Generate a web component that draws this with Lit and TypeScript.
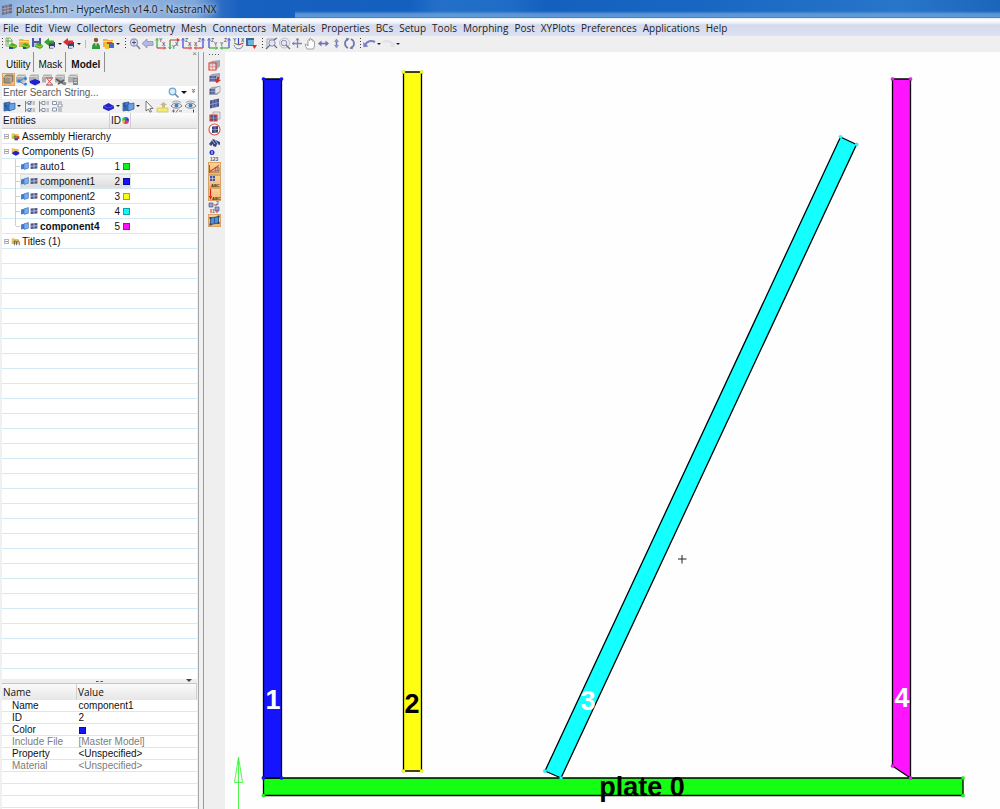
import { LitElement, html, svg, css } from "lit";
import { customElement, property, state } from "lit/decorators.js";
import { classMap } from "lit/directives/class-map.js";
import { styleMap } from "lit/directives/style-map.js";

const cube = svg`<path d="M1 5l3-2 8-1v6l-3 3H1z" fill="#a3a6b6"/><path d="M2 5h6v5H2z" fill="#4a5488"/><path d="M4 5v5M6 5v5M2 7.500h6" stroke="#a9b2dc" stroke-width=".6"/>`;
const blob = (c: string, d: string) => svg`<path d="M4 8l3-2 5 2v2l-3 2-5-2z" fill=${c}/><path d="M4 8l5 2 3-2" fill="none" stroke=${d} stroke-width=".8"/>`;
const folder = svg`<path d="M1 2h4l1 1h5v7H1z" fill="#e9b43f"/><path d="M1 4.500h10" stroke="#fbe08b"/>`;
const grayCube = svg`<path d="M1 3.500l2-2h8v6l-2 2H1z" fill="#b0b0b0"/><path d="M1 3.500h8v6M9 3.500l2-2" stroke="#dedede" fill="none" stroke-width=".8"/>`;
const glass = svg`<circle cx="6" cy="5.500" r="3.500" fill="#dfe3f4" stroke="#9a9fb8" stroke-width="1.300"/><path d="M8.500 8l3.500 4" stroke="#8286a0" stroke-width="1.600"/>`;
const plates = svg`<path d="M1 3l6-1v8l-6 1z" fill="#3f7fd0" stroke="#2a5592" stroke-width=".7"/><path d="M6 4l6-1v6l-6 2z" fill="#6ba2e6" stroke="#2a5592" stroke-width=".7"/>`;
const list = svg`<path d="M2.500 1v11M2.500 3h2.500M2.500 10h2.500" stroke="#888" stroke-width="1" fill="none"/><path d="M5 1.500h3v3H5zM5 8.500h3v3H5z" fill="#fff" stroke="#7d88a0" stroke-width=".9"/><path d="M9.500 2h2.500M9.500 4h2.500M9.500 9h2.500M9.500 11h2.500" stroke="#8a8a8a" stroke-width=".9"/>`;
const axes = (v: string, h: string, vc: string, hc: string, right = false) => svg`
  <path d=${right ? "M10 2v9" : "M3 2v9"} stroke=${vc} stroke-width="1.200"/>
  <path d=${right ? "M10 11H2" : "M3 11h8"} stroke=${hc} stroke-width="1.200"/>
  <path d=${right ? "M8.500 3.500L10 1l1.500 2.500" : "M1.500 3.500L3 1l1.500 2.500"} fill="none" stroke=${vc} stroke-width=".7"/>
  <path d=${right ? "M3.500 9.500L1 11l2.500 1.500" : "M9.500 9.500L12 11l-2.500 1.500"} fill="none" stroke=${hc} stroke-width=".7"/>
  <text x="5" y="5" class="tiny">${v}</text><text x=${right ? 1 : 8} y="9" class="tiny">${h}</text>`;

const ICONS: Record<string, unknown> = {
  app: svg`<path d="M1 3l10-2v9L1 12z" fill="#6c6a80"/><path d="M4 2.500v9M7 2v9M1 6l10-2M1 9l10-2" stroke="#b9b7c8" stroke-width=".7"/>`,
  newModel: svg`<path d="M1 1h4l2 2v6H1z" fill="#f4f7f0" stroke="#7c9a6c" stroke-width=".8"/><path d="M1 4h6M3 1v7" stroke="#4ca82c"/>${blob("#3fae2a", "#e7d23c")}<path d="M4 10h4v2H4z" fill="#2849c4"/>`,
  open: svg`${folder}${blob("#3fae2a", "#e7d23c")}<path d="M5 10h3v2H5z" fill="#2849c4"/>`,
  save: svg`<path d="M1 1h9v9H1z" fill="#4d59a6"/><path d="M3 1h5v3H3z" fill="#dfe4f5"/><path d="M3 6h5v4H3z" fill="#b9c2e4"/>${blob("#3fae2a", "#e7d23c")}`,
  import: svg`<path d="M5 5h6v5l-2 1.500H5z" fill="#3c4370"/><path d="M0 5l5-4v2.500h5v3H5V9z" fill="#35a52c"/><path d="M6 9h4v2H6z" fill="#cfd3e4"/>`,
  export: svg`<path d="M5 5h6v5l-2 1.500H5z" fill="#3c4370"/><path d="M0 5l5-4v2.500h5v3H5V9z" fill="#d83030"/><path d="M6 9h4v2H6z" fill="#cfd3e4"/>`,
  user: svg`<circle cx="7" cy="3" r="2.200" fill="#8a5a33"/><path d="M3 12c0-5 1-6 4-6s4 1 4 6z" fill="#2d9a3f"/><path d="M6 6h2l-1 4z" fill="#e9c9a4"/>`,
  cards: svg`${folder}<path d="M5 5h5v6H5z" fill="#d8402b"/><path d="M7 6h5v5H7z" fill="#3a70c9"/><path d="M3 7h4v5H3z" fill="#f0c22e"/>`,
  zoomPlus: svg`${glass}<path d="M4 5.500h4M6 3.500v4" stroke="#4b4f86" stroke-width="1"/>`,
  back: svg`<path d="M1 6.500l5-4.500v2.500h6v4H6V11z" fill="#b3b8e2" stroke="#8087bd" stroke-width=".7"/>`,
  xyTop: axes("Y", "X", "#35a835", "#d53a3a"),
  xyBottom: svg`<path d="M3 12V3" fill="none" stroke="#35a835" stroke-width="1.300"/><path d="M3 3h9M10 1.500L12 3l-2 1.500" fill="none" stroke="#d53a3a" stroke-width="1.200"/><path d="M1.500 10L3 12l1.500-2" fill="none" stroke="#35a835" stroke-width=".7"/><text x="8" y="9" class="tiny">X</text><text x="5" y="12" class="tiny">Y</text>`,
  xzLeft: axes("Z", "X", "#3a45d0", "#d53a3a"),
  xzRight: axes("Z", "X", "#3a45d0", "#d53a3a", true),
  yzLeft: axes("Z", "Y", "#3a45d0", "#35a835"),
  yzRight: axes("Z", "Y", "#3a45d0", "#35a835", true),
  iso: svg`<path d="M6.500 1v7" stroke="#3a45d0" stroke-width="1.200"/><path d="M6.500 8L2 6" stroke="#35a835" stroke-width="1.300"/><path d="M6.500 8l5-2" stroke="#d53a3a" stroke-width="1.300"/><path d="M2 8c1 5 8 5 9 0" fill="none" stroke="#7c7f9e" stroke-width="1"/><text x="1" y="5" class="tiny">Y</text><text x="9" y="5" class="tiny">X</text>`,
  views: svg`<path d="M1 1h8v8H1z" fill="#3d6796"/><path d="M3 3h6v5H3z" fill="#6fb1dd"/><path d="M7 8l5 0-2.500 4z" fill="#dd2a2a"/>`,
  zoomBox: svg`<path d="M2 11V2h9" fill="none" stroke="#9a9cb4" stroke-width=".9"/><circle cx="7" cy="6" r="3.200" fill="#dfe3f4" stroke="#8d92ad"/><path d="M5 8l-4 4M9 8l3 3M9 3l3-2" stroke="#6a6d98" stroke-width="1.200"/>`,
  zoomCircle: svg`<circle cx="6.500" cy="6" r="5" fill="none" stroke="#b4b6c8" stroke-width=".9"/><circle cx="6" cy="6" r="2.800" fill="#e4e7f4" stroke="#8d92ad"/><path d="M8 8l4 4" stroke="#6e7390" stroke-width="1.500"/>`,
  pan: svg`<path d="M6.500 2v9M2 6.500h9" stroke="#7f83bc" stroke-width="1.300"/><path d="M5 3.500L6.500 1 8 3.500M3.500 5L1 6.500 3.500 8" fill="none" stroke="#6f74b4" stroke-width=".8"/>`,
  hand: svg`<path d="M3 12L1 7.500l1.500-.5L4 9V3.500C4 2.500 5.500 2.500 5.500 3.500V2c0-1 1.700-1 1.700 0v1.200c0-1 1.600-1 1.600 0V4.500c0-1 1.700-.9 1.700.2V9l-1 3z" fill="#fff" stroke="#8a8a8a" stroke-width=".8"/>`,
  horiz: svg`<path d="M3 6.500h7" stroke="#6f74b4" stroke-width="1.600"/><path d="M4.500 3.500v6L1 6.500zM8.500 3.500v6L12 6.500z" fill="#6f74b4"/>`,
  vert: svg`<path d="M6.500 3v7" stroke="#6f74b4" stroke-width="1.600"/><path d="M4 5h5L6.500 1.500zM4 8h5l-2.500 3.500z" fill="#8e93cc"/>`,
  rotate: svg`<path d="M5 2C1 4 1 9 5 11M8 2c4 2 4 7 0 9" fill="none" stroke="#6f74b4" stroke-width="1.700"/><path d="M3 .8l3.500.7L4.500 4zM10 12.200l-3.500-.7L8.500 9z" fill="#6f74b4"/>`,
  undo: svg`<path d="M2 8c2-4 6-5 10-3" fill="none" stroke="#7a7ec4" stroke-width="2"/><path d="M0 5l5.500 4.500-5 .8z" fill="#7a7ec4"/>`,
  redo: svg`<path d="M11 8C9 4 5 3 1 5" fill="none" stroke="#dfe0ea" stroke-width="2"/><path d="M13 5L7.500 9.500l5 .8z" fill="#dfe0ea"/>`,
  box: svg`<path d="M2 4l2-2h7v6l-2 2H2z" fill="#9d9583" stroke="#6d6b66" stroke-width=".8"/><path d="M2 4h7v6" fill="none" stroke="#cbbfa8"/>`,
  share: svg`${grayCube}<path d="M4 8l6-3M4 8l6 4" stroke="#3a86cf"/><circle cx="4" cy="8" r="1.700" fill="#2c7fd4"/><circle cx="10.500" cy="5.500" r="1.500" fill="#2c7fd4"/><circle cx="10.500" cy="11" r="1.500" fill="#2c7fd4"/>`,
  blueComp: svg`${grayCube}<path d="M2 8l5-2 5 2v2l-5 2.500L2 10z" fill="#2222cc"/>`,
  hour: svg`${grayCube}<path d="M5 4.500h7v8H5z" fill="#f3eded"/><path d="M5 5h7M5 12h7" stroke="#8b3c3c"/><path d="M6 5.500l5 6M11 5.500l-5 6" stroke="#c44" stroke-width="1" fill="none"/>`,
  tools: svg`${grayCube}<path d="M2 6l8 5M4 11l6-4" stroke="#5a5a5a" stroke-width="1.600"/><circle cx="10.500" cy="10.500" r="1.800" fill="#888"/>`,
  solver: svg`${grayCube}<path d="M6 5h5v7H6z" fill="#8d8787"/><path d="M7 7h3M7 9.500h3" stroke="#ddd"/>`,
  entity: svg`${plates}<path d="M1 3l5 8M3 2.500v8M1 6h5" stroke="#244b84" stroke-width=".7"/>`,
  list1: svg`${list}<path d="M5.500 3l1 1 2-3M5.500 10l1 1 2-3" fill="none" stroke="#3a72b8" stroke-width=".9"/>`,
  list2: list,
  list3: svg`<path d="M1.500 1.500h4v3h-4zM7 4h4v3H7zM1.500 8h4v3h-4z" fill="#fff" stroke="#7d88a0" stroke-width=".9"/><path d="M7 2h4M7 9h4M7 11h4" stroke="#8a8a8a" stroke-width=".9"/>`,
  blue3d: svg`<path d="M1 6l5.500-3L12 6v2.500L6.500 11 1 8.500z" fill="#2323c8"/><path d="M1 6l5.500 2L12 6" fill="none" stroke="#6d6df0" stroke-width=".7"/>`,
  pointer: svg`<path d="M4 1v10l2.400-2 1.600 3.200 1.400-.7L7.900 8.500H11z" fill="#fff" stroke="#555" stroke-width=".8"/>`,
  tray: svg`<path d="M1 8h11v4H1z" fill="#f2ec6e" stroke="#c3bb5f" stroke-width=".6"/><path d="M6 7.500h3V5h2L7.500 2 4 5h2z" fill="#c9b48c"/>`,
  eyes: svg`<path d="M1 6c3-4 8-4 11 0-3 3-8 3-11 0z" fill="#e3eaf2" stroke="#6f7886" stroke-width=".9"/><circle cx="6.500" cy="5.500" r="2" fill="#4c7fb4"/><path d="M2 11h3M3.500 9.500v3M6 12.500l2-3M9 11h3" stroke="#555" stroke-width=".8"/><path d="M2 2.500C5 .5 8 .5 11 2.500" fill="none" stroke="#888" stroke-width=".8"/>`,
  eyeOne: svg`<path d="M1 6c3-4 8-4 11 0-3 3-8 3-11 0z" fill="#e3eaf2" stroke="#6f7886" stroke-width=".9"/><circle cx="6.500" cy="5.500" r="2" fill="#4c7fb4"/><path d="M9.500 9.500v3" stroke="#444"/><path d="M2 2.500C5 .5 8 .5 11 2.500" fill="none" stroke="#888" stroke-width=".8"/>`,
  search: svg`<circle cx="5.500" cy="5.500" r="3.300" fill="#d7ecfa" stroke="#6ba3cf" stroke-width="1.200"/><path d="M8 8l3.500 3.500" stroke="#6a88a8" stroke-width="1.600"/>`,
  assembly: svg`${folder}<path d="M4 5h4v4H4z" fill="#2faa2f"/><path d="M8 6h4v4H8z" fill="#d83a2c"/><path d="M5 9h5v3H5z" fill="#2b3fc9"/>`,
  comps: svg`${folder}<path d="M2 8l5-2.500 5 2.500v2l-5 2.500-5-2.500z" fill="#2222cc"/>`,
  titles: svg`${folder}<path d="M5 5v7M5 7c2-2 3-1 3 0v5M8 7c2-2 4-1 4 0v5" fill="none" stroke="#555" stroke-width="1.200"/>`,
  plate: svg`<path d="M0 4l5-1v8l-5 1z" fill="#3f7fd0"/><path d="M5 3l7-2v9l-7 2z" fill="#7aaef0" stroke="#3567ad" stroke-width="1"/>`,
  mesh: svg`<path d="M1 2.500l11-1v9l-11 1z" fill="#4a5488"/><path d="M6.500 2v9M1 7l11-1" stroke="#c4cae8" stroke-width="1.400"/>`,
  v1: svg`${cube}<path d="M1 5h7v7H1z" fill="#fff" fill-opacity=".7" stroke="#e0402f" stroke-width="1.100"/><path d="M4.500 5v7M1 8.500h7" stroke="#e58176" stroke-width=".6"/>`,
  v2: svg`${cube}<path d="M6 8h3V6h2v3l-2.500 3z" fill="#d92d2d"/><path d="M6 8l3 4 4-3z" fill="#d92d2d"/>`,
  v3: svg`${cube}<path d="M7 4l5-2v6l-5 2z" fill="#e6e6ee" stroke="#8c8ca0" stroke-width=".6"/>`,
  v4: svg`<path d="M2 3.500l9-2v8l-9 2z" fill="#4a5488"/><path d="M5 3v8M8 2.500v8M2 7.500l9-2" stroke="#9ca5d6" stroke-width=".8"/>`,
  v5: svg`<path d="M5 2h7v7H5z" fill="#e3e3ea" stroke="#9a9aaa" stroke-width=".7"/><path d="M2 5h7v6H2z" fill="#4a5488" stroke="#e0402f" stroke-width="1.200"/><path d="M5.500 5v6M2 8h7" stroke="#9ca5d6" stroke-width=".7"/>`,
  v6: svg`<circle cx="6.500" cy="6.500" r="5.500" fill="#fff" stroke="#e0503f" stroke-width="1.100"/><path d="M4 3.500l6-.5v6.500l-6 .5z" fill="#39447f"/><path d="M7 3.500v6M4 6.500h6" stroke="#9ca5d6" stroke-width=".7"/>`,
  v7: svg`<path d="M1 8l4-5 7 3v3l-3-1-1 3-3-1v-2l-2 2z" fill="#39447f"/><path d="M4 4l3 4M7 4l3 4" stroke="#a8b0da"/>`,
  v8: svg`<circle cx="4" cy="3.500" r="2.500" fill="#2530c0"/><path d="M4 2v3" stroke="#fff" stroke-width=".9"/><text x="2" y="12" class="tiny">123</text>`,
  v9: svg`<path d="M1.500 11V3M1.500 10l9-6M1.500 10h10" stroke="#8a5a3a" stroke-width=".9" fill="none"/><path d="M2 9l4-2 5-4" stroke="#d0482c" fill="none"/><text x="6" y="9" class="tiny">10</text>`,
  v10: svg`<path d="M2 1h5v5H2z" fill="#4a5488"/><path d="M4.500 1v5M2 3.500h5" stroke="#c4cae8" stroke-width=".7"/><text x="3" y="12" class="mini">ABC</text>`,
  v11: svg`<path d="M2.500 1v9" stroke="#d92020" stroke-width="1.200"/><path d="M1 8h3l-1.500 4z" fill="#d92020"/><text x="4" y="12" class="mini">ABC</text>`,
  v12: svg`<path d="M1 2h4v4H1zM7 6h4v4H7z" fill="#9ba1c6" stroke="#4a5488" stroke-width=".7"/><path d="M6 4h3M9 12v-3M3 8v4" stroke="#d92d2d"/><text x="8" y="4" class="tiny">2</text><text x="4" y="12" class="tiny">1</text>`,
  v13: svg`<path d="M2.500 4l8-1.500v6.500l-8 1.500z" fill="#4a8fe0" stroke="#27456e" stroke-width=".8"/><path d="M6.500 3.500v6" stroke="#27456e" stroke-width=".7"/><path d="M1.500 3h2v2h-2zM9.500 1.500h2v2h-2zM1.500 9.500h2v2h-2zM9.500 8h2v2h-2z" fill="#27456e"/>`,
};

@customElement("hm-icon")
class HmIcon extends LitElement {
  @property() name = "";
  static styles = css`
    :host { display: block; width: 13px; height: 13px; flex: none; }
    svg { display: block; width: 100%; height: 100%; }
    .tiny { font: bold 5px "Liberation Sans", sans-serif; fill: #5a5f70; }
    .mini { font: bold 4px "Liberation Sans", sans-serif; fill: #3c3226; }
  `;
  render() {
    return html`<svg viewBox="0 0 13 13" aria-hidden="true">${ICONS[this.name]}</svg>`;
  }
}

@customElement("hm-tool")
class HmTool extends LitElement {
  @property() icon = "";
  @property() label = "";
  @property({ type: Boolean }) menu = false;
  @property({ type: Boolean }) active = false;
  static styles = css`
    :host { display: flex; flex: none; }
    button { display: flex; align-items: center; border: 0; padding: 0; margin: 0; background: none; }
    .active { background: linear-gradient(#fbd49c, #f6b468); box-shadow: inset 0 0 0 1px #d9a468; }
    .arrow { width: 6px; display: flex; justify-content: center; }
    .arrow::after { content: ""; border: 2px solid transparent; border-top-color: #222; border-bottom: 0; }
  `;
  render() {
    return html`<button class=${classMap({ active: this.active })} aria-label=${this.label}>
      <hm-icon name=${this.icon}></hm-icon>${this.menu ? html`<span class="arrow"></span>` : ""}
    </button>`;
  }
}

interface Comp { id: number; name: string; color: string; current?: boolean }

const COMPONENTS: Comp[] = [
  { id: 1, name: "auto1", color: "#0df21a" },
  { id: 2, name: "component1", color: "#1414f5" },
  { id: 3, name: "component2", color: "#fbfb14" },
  { id: 4, name: "component3", color: "#14f5fb" },
  { id: 5, name: "component4", color: "#fb14fb", current: true },
];

const MENUS = ["File", "Edit", "View", "Collectors", "Geometry", "Mesh", "Connectors", "Materials", "Properties", "BCs", "Setup", "Tools", "Morphing", "Post", "XYPlots", "Preferences", "Applications", "Help"];

type Tool = [string, string, boolean?];
const GROUPS: Tool[][] = [
  [["newModel", "New model"], ["open", "Open model"], ["save", "Save model"], ["import", "Import", true], ["export", "Export", true], ["|", ""], ["user", "User profile"], ["cards", "Panels", true]],
  [["zoomPlus", "Zoom in"], ["back", "Previous view"], ["xyTop", "XY top view"], ["xyBottom", "XY bottom view"], ["xzLeft", "XZ left view"], ["xzRight", "XZ right view"], ["yzLeft", "YZ rear view"], ["yzRight", "YZ front view"], ["iso", "Isometric view"], ["views", "Saved views"]],
  [["zoomBox", "Fit"], ["zoomCircle", "Circle zoom"], ["pan", "Center"], ["hand", "Pan"], ["horiz", "Rotate left or right"], ["vert", "Rotate up or down"], ["rotate", "Spin"]],
  [["undo", "Undo", true], ["redo", "Redo", true]],
];

const SIDE_TOOLS = ["Mask", "Reverse", "Unmask adjacent", "Unmask all", "Mask not shown", "Spherical clip", "Find", "Numbers", "Measures", "Labels", "Loads", "Normals", "Fixed points"];

@customElement("hm-browser")
class HmBrowser extends LitElement {
  @state() private selected = 2;
  static styles = css`
    :host {
      display: flex; flex-direction: column; width: 199px; flex: none; box-sizing: border-box;
      padding: 0 1px 0 2px; background: #f0f0f0; color: #111; border-right: 1px solid #a8a8a8;
      font: 10px/15px "Liberation Sans", sans-serif;
    }
    button, input { font: inherit; color: inherit; border: 0; padding: 0; background: none; }
    .tabs { display: flex; height: 20px; align-items: stretch; }
    .tab { border-right: 1px solid #8e8e8e; padding: 4px 3px 0 4px; }
    .tab.on { font-weight: bold; padding: 4px 4px 0 5px; }
    .close { margin-left: auto; align-self: flex-start; line-height: 3px; color: #777; font-size: 8px; }
    .row { display: flex; height: 14px; box-sizing: border-box; align-items: center; }
    .search { background: #fff; height: 13px; }
    .search input { flex: 1; min-width: 0; padding-left: 1px; outline: 0; height: 12px; }
    .search input::placeholder { color: #5c5c5c; opacity: 1; }
    .drop { width: 8px; display: flex; justify-content: center; }
    .drop::after { content: ""; border: 3px solid transparent; border-top-color: #111; border-bottom: 0; }
    .more { width: 9px; font-size: 8px; line-height: 8px; transform: rotate(90deg); }
    .tools { justify-content: space-between; padding-left: 1px; }
    .left, .right { display: flex; gap: 1px; }
    .head { display: flex; height: 16px; box-sizing: border-box; line-height: 16px; background: linear-gradient(#fdfdfd, #e6e6e6); border-bottom: 1px solid #d0d0d0; }
    .head span { box-sizing: border-box; }
    .h1 { width: 108px; padding-left: 1px; border-right: 1px solid #cfcfcf; }
    .h2 { width: 21px; padding-left: 1px; border-right: 1px solid #cfcfcf; display: flex; gap: 1px; align-items: center; }
    .wheel { width: 7px; height: 7px; border-radius: 50%; background: conic-gradient(#28c, #33c, #c3c, #e33, #ec3, #3c3, #28c); }
    .tree {
      flex: 1; min-height: 0; overflow: hidden; margin: 0; padding: 0; list-style: none;
      background: repeating-linear-gradient(#fff 0 14px, #d3e9f5 14px 15px);
    }
    .tree ul { list-style: none; margin: 0; padding: 0 0 0 18px; position: relative; }
    .tree ul::before { content: ""; position: absolute; left: 13px; top: 0; bottom: 7px; border-left: 1px solid #cfcfcf; }
    .tree ul li { position: relative; }
    .tree ul li::before { content: ""; position: absolute; left: -4px; top: 7px; width: 4px; border-top: 1px solid #cfcfcf; }
    .node { display: flex; height: 15px; align-items: center; gap: 1px; padding-left: 2px; }
    .node hm-icon { width: 9px; height: 9px; margin: 0 1px; }
    .exp { width: 5px; height: 5px; box-sizing: border-box; border: 1px solid #b5b5b5; background: linear-gradient(#999, #999) center / 3px 1px no-repeat #fff; }
    .leaf { display: flex; width: 111px; height: 14px; margin-bottom: 1px; align-items: center; text-align: left; }
    .leaf hm-icon { width: 8px; height: 8px; margin-left: 1px; }
    .leaf.sel { background: linear-gradient(#f4f4f4, #dcdcdc); box-shadow: inset 0 0 0 1px #e2e2e2; }
    .leaf .nm { flex: 1; padding-left: 2px; }
    .leaf .id { padding-right: 3px; }
    .cur .nm { font-weight: bold; }
    .sw { display: inline-block; width: 7px; height: 7px; box-sizing: border-box; border: 1px solid #0005; margin-right: 1px; }
    .split { height: 4px; display: flex; justify-content: center; align-items: center; background: #eee; position: relative; border-bottom: 1px solid #c6c6c6; }
    .split::before { content: ""; width: 7px; border-top: 1px dashed #555; }
    .split::after { content: ""; position: absolute; right: 5px; top: 0; border: 3px solid transparent; border-top-color: #444; border-bottom: 0; }
    .props { height: 125px; background: repeating-linear-gradient(#fff 0 11px, #d3e9f5 11px 12px) 0 16px; overflow: hidden; }
    table { border-collapse: collapse; width: 100%; table-layout: fixed; }
    th, td { padding: 0; font-weight: normal; text-align: left; line-height: 12px; height: 12px; }
    thead th { font: 10px/16px "Open Sans", sans-serif; height: 16px; background: linear-gradient(#fafafa, #e6e6e6); border-right: 1px solid #d0d0d0; }
    thead th { padding-left: 1px; }
    .c1 { width: 73px; }
    tbody th { padding-left: 10px; }
    tbody td { padding-left: 2px; }
    .dim { color: #7c7c7c; }
    td .sw { display: block; }
  `;
  render() {
    const sel = COMPONENTS.find((c) => c.id === this.selected)!;
    const rows: [string, unknown, boolean][] = [
      ["Name", sel.name, false],
      ["ID", sel.id, false],
      ["Color", html`<span class="sw" style=${styleMap({ background: sel.color })}></span>`, false],
      ["Include File", "[Master Model]", true],
      ["Property", "<Unspecified>", false],
      ["Material", "<Unspecified>", true],
    ];
    return html`
      <div class="tabs" role="tablist">
        <button class="tab" role="tab">Utility</button>
        <button class="tab" role="tab">Mask</button>
        <button class="tab on" role="tab" aria-selected="true">Model</button>
        <button class="close" aria-label="Close">×</button>
      </div>
      <div class="row">
        ${["box", "share", "blueComp", "hour", "tools", "solver"].map((n, i) => html`<hm-tool icon=${n} label=${n} ?active=${i === 0}></hm-tool>`)}
      </div>
      <label class="row search">
        <input type="text" placeholder="Enter Search String..." aria-label="Search" />
        <hm-icon name="search"></hm-icon><span class="drop"></span><span class="more">»</span>
      </label>
      <div class="row tools">
        <div class="left">
          <hm-tool icon="entity" label="Entities" menu></hm-tool><hm-tool icon="list1" label="Expand"></hm-tool><hm-tool icon="list2" label="Collapse"></hm-tool><hm-tool icon="list3" label="Reorder"></hm-tool>
        </div>
        <div class="right">
          <hm-tool icon="blue3d" label="Components" menu></hm-tool><hm-tool icon="entity" label="Elements" menu></hm-tool><hm-tool icon="pointer" label="Selector"></hm-tool><hm-tool icon="tray" label="Add to panel"></hm-tool><hm-tool icon="eyes" label="Display"></hm-tool><hm-tool icon="eyeOne" label="Isolate"></hm-tool>
        </div>
      </div>
      <div class="head"><span class="h1">Entities</span><span class="h2">ID<i class="wheel"></i></span></div>
      <ul class="tree" role="tree">
        <li role="treeitem"><div class="node"><i class="exp"></i><hm-icon name="assembly"></hm-icon><span>Assembly Hierarchy</span></div></li>
        <li role="treeitem"><div class="node"><i class="exp"></i><hm-icon name="comps"></hm-icon><span>Components (${COMPONENTS.length})</span></div>
          <ul role="group">
            ${COMPONENTS.map((c) => html`<li role="treeitem">
              <button class=${classMap({ leaf: true, sel: c.id === this.selected, cur: !!c.current })} @click=${() => (this.selected = c.id)}>
                <hm-icon name="plate"></hm-icon><hm-icon name="mesh"></hm-icon><span class="nm">${c.name}</span><span class="id">${c.id}</span><i class="sw" style=${styleMap({ background: c.color })}></i>
              </button></li>`)}
          </ul>
        </li>
        <li role="treeitem"><div class="node"><i class="exp"></i><hm-icon name="titles"></hm-icon><span>Titles (1)</span></div></li>
      </ul>
      <div class="split"></div>
      <div class="props">
        <table>
          <thead><tr><th class="c1">Name</th><th>Value</th></tr></thead>
          <tbody>${rows.map(([k, v, dim]) => html`<tr class=${classMap({ dim })}><th scope="row">${k}</th><td>${v}</td></tr>`)}</tbody>
        </table>
      </div>`;
  }
}

@customElement("hm-scene")
class HmScene extends LitElement {
  static styles = css`
    :host { display: block; flex: 1; min-width: 0; background: #fefefe; overflow: hidden; }
    svg { display: block; width: 100%; height: 100%; }
    .plate { stroke: #000; stroke-width: 1.3; }
    .label { font: bold 27px "Liberation Sans", sans-serif; text-anchor: middle; }
  `;
  render() {
    const plates: { pts: number[][]; fill: string }[] = [
      { pts: [[263.5, 778], [963, 778], [963, 795.5], [263.5, 795.5]], fill: "#14ff14" },
      { pts: [[263.5, 79], [281.5, 79], [281.5, 778], [263.5, 778]], fill: "#1414ff" },
      { pts: [[403.5, 72], [421.5, 72], [421.5, 771], [403.5, 771]], fill: "#ffff14" },
      { pts: [[840.5, 137], [856.5, 144.5], [561, 778], [545, 771]], fill: "#14ffff" },
      { pts: [[892.5, 79], [910.5, 79], [910.5, 778], [892.5, 766]], fill: "#ff14ff" },
    ];
    return html`<svg viewBox="225 52 775 757" preserveAspectRatio="xMinYMin meet" role="img">
      ${plates.map((p) => svg`
        <polygon class="plate" points=${p.pts.map((q) => q.join(",")).join(" ")} fill=${p.fill}/>
        ${p.pts.map(([x, y]) => svg`<circle cx=${x} cy=${y} r="1.800" fill=${p.fill} stroke="#0003" stroke-width=".5"/>`)}`)}
      <path d="M238.500 809V757l-4 25.500h8l-4-25.500" fill="none" stroke="#3cf53c" stroke-width=".9"/>
      <path d="M678 559h8.500M682 555v8.500" stroke="#222" stroke-width="1"/>
      <text class="label" x="273" y="709" fill="#fff">1</text>
      <text class="label" x="412" y="713">2</text>
      <text class="label" x="588" y="710" fill="#fff">3</text>
      <text class="label" x="902" y="707" fill="#fff">4</text>
      <text class="label" x="642" y="796">plate 0</text>
    </svg>`;
  }
}

@customElement("app-root")
class AppRoot extends LitElement {
  static styles = css`
    :host { display: flex; flex-direction: column; height: 100vh; overflow: hidden; background: #f0f0f0; font: 10px/16px "Open Sans", sans-serif; color: #1c1c1c; }
    .title {
      display: flex; align-items: center; gap: 2px; height: 19px; flex: none; box-sizing: border-box; padding-left: 1px;
      border-bottom: 1px solid #e8eef8;
      background:
        linear-gradient(#7fb0e000 11px, #6ea5dcc0 14px, #6ea5dcd0 17px, #3c6da8 18px) 295px 0 no-repeat,
        linear-gradient(90deg, #8aaedc 0, #a6c1e6 60px, #7fa6da 195px, #2b6cc4 222px, #1761bf 240px, #1460c0 410px, #2470c8 440px, #1f6cc6 510px, #1460be 545px, #1767c2 70%, #2876c9 90%, #1b66bb);
    }
    .title span { text-shadow: 0 0 4px #fff9, 0 0 6px #fff9; color: #15181f; }
    .menu { display: flex; gap: 6px; height: 17px; flex: none; padding-left: 3px; background: linear-gradient(#fafbfe 0 2px, #eceff8 4px, #d4daed 6px, #dde2f2); }
    .menu button { border: 0; padding: 0; background: none; font: inherit; color: inherit; }
    .bar { display: flex; gap: 2px; height: 16px; flex: none; background: #efefef; }
    .group { display: flex; height: 15px; align-items: center; }
    .grip { width: 5px; height: 11px; background: repeating-linear-gradient(#444 0 1px, #efefef 1px 3px) 2px 0 / 1px 100% no-repeat; }
    .sep { width: 7px; height: 8px; background: linear-gradient(#bbb, #bbb) 3px 0 / 1px 100% no-repeat; }
    .body { display: flex; flex: 1; min-height: 0; }
    .side { width: 22px; flex: none; margin-left: 4px; box-sizing: border-box; border-left: 1px solid #999; background: #efefef; display: flex; flex-direction: column; align-items: center; }
    .side .dots { width: 12px; height: 6px; background: repeating-linear-gradient(90deg, #555 0 1px, #efefef 1px 3px) 0 2px / 100% 1px no-repeat; }
  `;
  render() {
    return html`
      <header class="title"><hm-icon name="app"></hm-icon><span>plates1.hm - HyperMesh v14.0 - NastranNX</span></header>
      <nav class="menu">${MENUS.map((m) => html`<button>${m}</button>`)}</nav>
      <div class="bar">
        ${GROUPS.map((g) => html`<div class="group"><i class="grip"></i>${g.map(([icon, label, menu]) => icon === "|" ? html`<i class="sep"></i>` : html`<hm-tool icon=${icon} label=${label} ?menu=${menu}></hm-tool>`)}</div>`)}
      </div>
      <div class="body">
        <hm-browser></hm-browser>
        <div class="side"><i class="dots"></i>${SIDE_TOOLS.map((label, i) => html`<hm-tool icon=${"v" + (i + 1)} label=${label} ?active=${[8, 9, 10, 12].includes(i)}></hm-tool>`)}</div>
        <hm-scene></hm-scene>
      </div>`;
  }
}
